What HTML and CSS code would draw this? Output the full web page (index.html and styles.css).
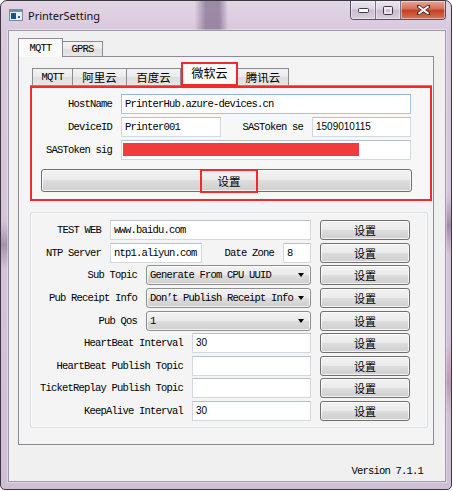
FILE: index.html
```html
<!DOCTYPE html>
<html>
<head>
<meta charset="utf-8">
<link rel="stylesheet" href="styles.css">
</head>
<body>
<div class="window">
  <div class="titlebar">
    <svg class="app-icon" width="14" height="12" viewBox="0 0 14 12">
      <rect x="0.5" y="0.5" width="13" height="11" fill="#e8eef4" stroke="#7d8a98"/>
      <rect x="1" y="1" width="12" height="2" fill="#6f8fb4"/>
      <rect x="2" y="4" width="5" height="6" fill="#1f4f86"/>
      <rect x="9" y="7" width="2" height="2" fill="#2c5d94"/>
    </svg>
    <span class="title">PrinterSetting</span>
    <div class="caption">
      <div class="cbtn">
        <svg width="11" height="5" viewBox="0 0 11 5"><rect x="0.5" y="0.5" width="10" height="4" rx="1" fill="#fff" stroke="#3d3a48"/></svg>
      </div>
      <div class="cbtn">
        <svg width="10" height="9" viewBox="0 0 10 9"><rect x="0.5" y="0.5" width="9" height="8" rx="1" fill="none" stroke="#3d3a48"/><rect x="2" y="2" width="6" height="5" fill="none" stroke="#fff"/></svg>
      </div>
      <div class="cbtn close">
        <svg width="13" height="10" viewBox="0 0 13 10"><path d="M1 1 L12 9 M12 1 L1 9" stroke="#4a2a24" stroke-width="3.6" stroke-linecap="round"/><path d="M1.5 1.2 L11.5 8.8 M11.5 1.2 L1.5 8.8" stroke="#fff" stroke-width="2"/></svg>
      </div>
    </div>
  </div>

  <div class="client">
    <div class="otabbar">
      <div class="otab sel">MQTT</div>
      <div class="otab">GPRS</div>
    </div>
    <div class="opane">
      <div class="itabbar">
        <div class="itab t1 mono">MQTT</div>
        <div class="itab t2">阿里云</div>
        <div class="itab t3">百度云</div>
        <div class="itab t4 sel">微软云</div>
        <div class="itab t5">腾讯云</div>
      </div>
      <div class="cloud">
        <div class="crow">
          <div class="clabel">HostName</div>
          <div class="edit focus">PrinterHub.azure-devices.cn</div>
        </div>
        <div class="crow">
          <div class="clabel">DeviceID</div>
          <div class="edit dev">Printer001</div>
          <div class="mlabel">SASToken se</div>
          <div class="edit se sans">1509010115</div>
        </div>
        <div class="crow">
          <div class="clabel">SASToken sig</div>
          <div class="edit sig"><span class="redact"></span></div>
        </div>
        <div class="bigbtn"><span class="mark">设置</span></div>
      </div>

      <div class="group">
        <div class="grow">
          <div class="glabel a">TEST WEB</div>
          <div class="edit grow-field">www.baidu.com</div>
          <div class="btn">设置</div>
        </div>
        <div class="grow">
          <div class="glabel a">NTP Server</div>
          <div class="edit ntp">ntp1.aliyun.com</div>
          <div class="mlabel">Date Zone</div>
          <div class="edit zone">8</div>
          <div class="btn">设置</div>
        </div>
        <div class="grow">
          <div class="glabel b">Sub Topic</div>
          <div class="combo">Generate From CPU UUID<span class="arrow"></span></div>
          <div class="btn">设置</div>
        </div>
        <div class="grow">
          <div class="glabel b">Pub Receipt Info</div>
          <div class="combo">Don’t Publish Receipt Info<span class="arrow"></span></div>
          <div class="btn">设置</div>
        </div>
        <div class="grow">
          <div class="glabel b">Pub Qos</div>
          <div class="combo">1<span class="arrow"></span></div>
          <div class="btn">设置</div>
        </div>
        <div class="grow">
          <div class="glabel c">HeartBeat Interval</div>
          <div class="edit grow-field sans">30</div>
          <div class="btn">设置</div>
        </div>
        <div class="grow">
          <div class="glabel c">HeartBeat Publish Topic</div>
          <div class="edit grow-field"></div>
          <div class="btn">设置</div>
        </div>
        <div class="grow">
          <div class="glabel c">TicketReplay Publish Topic</div>
          <div class="edit grow-field"></div>
          <div class="btn">设置</div>
        </div>
        <div class="grow">
          <div class="glabel c">KeepAlive Interval</div>
          <div class="edit grow-field sans">30</div>
          <div class="btn">设置</div>
        </div>
      </div>
    </div>
    <div class="version">Version 7.1.1</div>
  </div>
</div>
</body>
</html>
```

FILE: styles.css
```css
* { box-sizing: border-box; }
html, body { margin: 0; padding: 0; }
body {
  width: 453px;
  height: 491px;
  background: #ffffff;
  overflow: hidden;
  font-family: "Liberation Mono", monospace;
  font-size: 10.5px;
  letter-spacing: -0.8px;
  color: #000;
}

.window {
  width: 452px;
  height: 490px;
  border: 1px solid #3a3842;
  border-radius: 7px 7px 5px 5px;
  display: flex;
  flex-direction: column;
  overflow: hidden;
  background:
    linear-gradient(90deg, rgba(0,0,0,0) 43%, rgba(110,90,125,0.6) 45.5%, rgba(110,90,125,0.6) 48.5%, rgba(0,0,0,0) 50.5%) top left / 100% 30px no-repeat,
    linear-gradient(180deg, rgba(110,85,120,0) 45%, rgba(110,85,120,0.45) 50%, rgba(110,85,120,0) 55%) left / 8px 100% no-repeat,
    linear-gradient(180deg, rgba(110,85,120,0) 40%, rgba(110,85,120,0.5) 46%, rgba(110,85,120,0) 52%, rgba(0,0,0,0) 70%, rgba(160,90,120,0.4) 78%, rgba(0,0,0,0) 85%) right / 7px 100% no-repeat,
    linear-gradient(180deg, #e2d6e5 0, #d8c8dc 30px, #cfbfd5 100%);
}

.titlebar {
  height: 29px;
  flex: none;
  display: flex;
  align-items: flex-start;
}
.app-icon { margin: 8px 0 0 8px; flex: none; }
.title {
  font-family: "Noto Sans", sans-serif;
  font-size: 11px;
  letter-spacing: 0;
  line-height: 15px;
  margin: 7px 0 0 5px;
  color: #111;
}
.caption {
  margin-left: auto;
  margin-right: 5px;
  display: flex;
  height: 19px;
  border: 1px solid #57525f;
  border-top: none;
  border-radius: 0 0 4px 4px;
  overflow: hidden;
}
.cbtn {
  width: 25px;
  height: 100%;
  display: flex;
  align-items: center;
  justify-content: center;
  border-right: 1px solid #7a7385;
  background: linear-gradient(180deg, #ece6ef 0%, #ddd3e1 45%, #c9bccf 50%, #d9cfdd 100%);
  box-shadow: inset 0 0 0 1px rgba(255,255,255,0.45);
}
.cbtn.close {
  width: 44px;
  border-right: none;
  background: linear-gradient(180deg, #e7a797 0%, #d66c54 45%, #c23e22 50%, #d67458 100%);
}

.client {
  flex: 1;
  margin: 0 5px 7px 7px;
  border: 1px solid #9e9aab;
  box-shadow: 0 0 0 1px rgba(255,255,255,0.35);
  background: #f0f0f0;
  padding: 7px 11px 0 9px;
  display: flex;
  flex-direction: column;
}

.otabbar {
  height: 18px;
  display: flex;
  align-items: flex-end;
}
.otab {
  height: 15px;
  border: 1px solid #898c95;
  border-bottom: none;
  background: linear-gradient(180deg, #f3f3f3 0%, #ebebeb 50%, #dedede 51%, #e6e6e6 100%);
  display: flex;
  align-items: center;
  justify-content: center;
  width: 40px;
  margin-left: -1px;
}
.otab.sel {
  width: 45px;
  margin-left: 0;
  height: 19px;
  margin-bottom: -1px;
  background: #fafafa;
  position: relative;
  z-index: 1;
  border-right: 1px solid #898c95;
}
.otab.sel + .otab { margin-left: 0; border-left: none; }

.opane {
  border: 1px solid #898c95;
  background: #f4f4f4;
  padding: 5px 5px 16px 11px;
}

.itabbar {
  height: 24px;
  width: 402px;
  display: flex;
  align-items: flex-end;
  padding-left: 2px;
  background: linear-gradient(#898c95, #898c95) left bottom / 100% 1px no-repeat;
}
.itab {
  height: 18px;
  border: 1px solid #898c95;
  border-left: none;
  background: linear-gradient(180deg, #f3f3f3 0%, #ebebeb 50%, #dedede 51%, #e6e6e6 100%);
  display: flex;
  align-items: center;
  justify-content: center;
  font-family: "Noto Sans CJK SC", sans-serif;
  font-size: 11.5px;
  letter-spacing: 0;
  line-height: 14px;
}
.itab.t1 {
  border-left: 1px solid #898c95;
  width: 41px;
  font-family: "Liberation Mono", monospace;
  font-size: 10.5px;
  letter-spacing: -0.8px;
}
.itab.t2 { width: 54px; }
.itab.t3 { width: 54px; }
.itab.t4 { width: 57px; }
.itab.t5 { width: 51px; }
.itab.sel {
  height: 24px;
  border: 2px solid #ef2b2e;
  background: #fbfbfb;
  font-size: 12px;
  padding-bottom: 2px;
}

.cloud {
  width: 402px;
  height: 115px;
  border: 2px solid #ef2b2e;
  background: #f7f7f7;
  padding: 6px 19px 7px 0;
  display: flex;
  flex-direction: column;
  gap: 3px;
}
.crow {
  height: 20px;
  display: flex;
  align-items: center;
}
.clabel {
  width: 80px;
  text-align: right;
  margin-right: 9px;
  flex: none;
  white-space: nowrap;
}
.mlabel {
  flex: 1;
  text-align: right;
  margin-right: 9px;
  white-space: nowrap;
}

.edit {
  height: 20px;
  background: #ffffff;
  border: 1px solid #d1d8e1;
  border-top-color: #b8c0ca;
  padding-left: 3px;
  line-height: 18px;
  white-space: nowrap;
  overflow: hidden;
  flex: 1;
}
.edit.focus { border-color: #a6c4e4; border-top-color: #8fb2d8; }
.edit.dev { flex: none; width: 100px; }
.edit.se { flex: none; width: 99px; }
.edit.sig { padding: 2px 0 0 1px; }
.redact {
  display: block;
  width: 236px;
  height: 13px;
  background: #f23b3b;
}
.sans {
  font-family: "Liberation Sans", sans-serif;
  font-size: 10px;
  letter-spacing: 0;
}

.bigbtn {
  margin: 6px 0 0 9px;
  width: 371px;
  height: 23px;
  flex: none;
  border: 1px solid #707070;
  border-radius: 3px;
  background: linear-gradient(180deg, #f2f2f2 0%, #ebebeb 48%, #dddddd 50%, #cfcfcf 100%);
  box-shadow: inset 0 0 0 1px rgba(255,255,255,0.75);
  display: flex;
  justify-content: center;
  align-items: flex-start;
}
.mark {
  width: 58px;
  height: 24px;
  margin: -1px 0 0 5px;
  border: 2px solid #ef2b2e;
  display: flex;
  align-items: center;
  justify-content: center;
  font-family: "Noto Sans CJK SC", sans-serif;
  font-size: 11.5px;
  letter-spacing: 0;
}

.group {
  margin-top: 11px;
  width: 398px;
  border: 1px solid #d5dfe5;
  border-radius: 3px;
  box-shadow: inset 0 0 0 1px rgba(255,255,255,0.6);
  padding: 7px 17px 6px 9px;
  display: flex;
  flex-direction: column;
  gap: 2.625px;
}
.grow {
  height: 20px;
  display: flex;
  align-items: center;
}
.glabel {
  flex: none;
  text-align: right;
  margin-right: 9px;
  white-space: nowrap;
}
.glabel.a { width: 61px; }
.glabel.b { width: 97px; }
.glabel.c { width: 143px; }
.edit.ntp { flex: none; width: 92px; }
.edit.zone { flex: none; width: 28px; }

.combo {
  flex: 1;
  height: 20px;
  border: 1px solid #8e8f8f;
  border-radius: 3px;
  background: linear-gradient(180deg, #f2f2f2 0%, #ebebeb 48%, #dddddd 50%, #cfcfcf 100%);
  box-shadow: inset 0 0 0 1px rgba(255,255,255,0.7);
  display: flex;
  align-items: center;
  justify-content: space-between;
  padding: 0 6px 0 3px;
  white-space: nowrap;
}
.arrow {
  width: 0;
  height: 0;
  border-left: 3.5px solid transparent;
  border-right: 3.5px solid transparent;
  border-top: 4px solid #000;
}

.btn {
  flex: none;
  width: 90px;
  height: 20px;
  margin-left: 9px;
  border: 1px solid #707070;
  border-radius: 3px;
  background: linear-gradient(180deg, #f2f2f2 0%, #ebebeb 48%, #dddddd 50%, #cfcfcf 100%);
  box-shadow: inset 0 0 0 1px rgba(255,255,255,0.75);
  display: flex;
  align-items: center;
  justify-content: center;
  font-family: "Noto Sans CJK SC", sans-serif;
  font-size: 11px;
  letter-spacing: 0;
  line-height: 14px;
}

.version {
  margin-top: 20px;
  line-height: 13px;
  text-align: right;
  padding-right: 11px;
}
```
